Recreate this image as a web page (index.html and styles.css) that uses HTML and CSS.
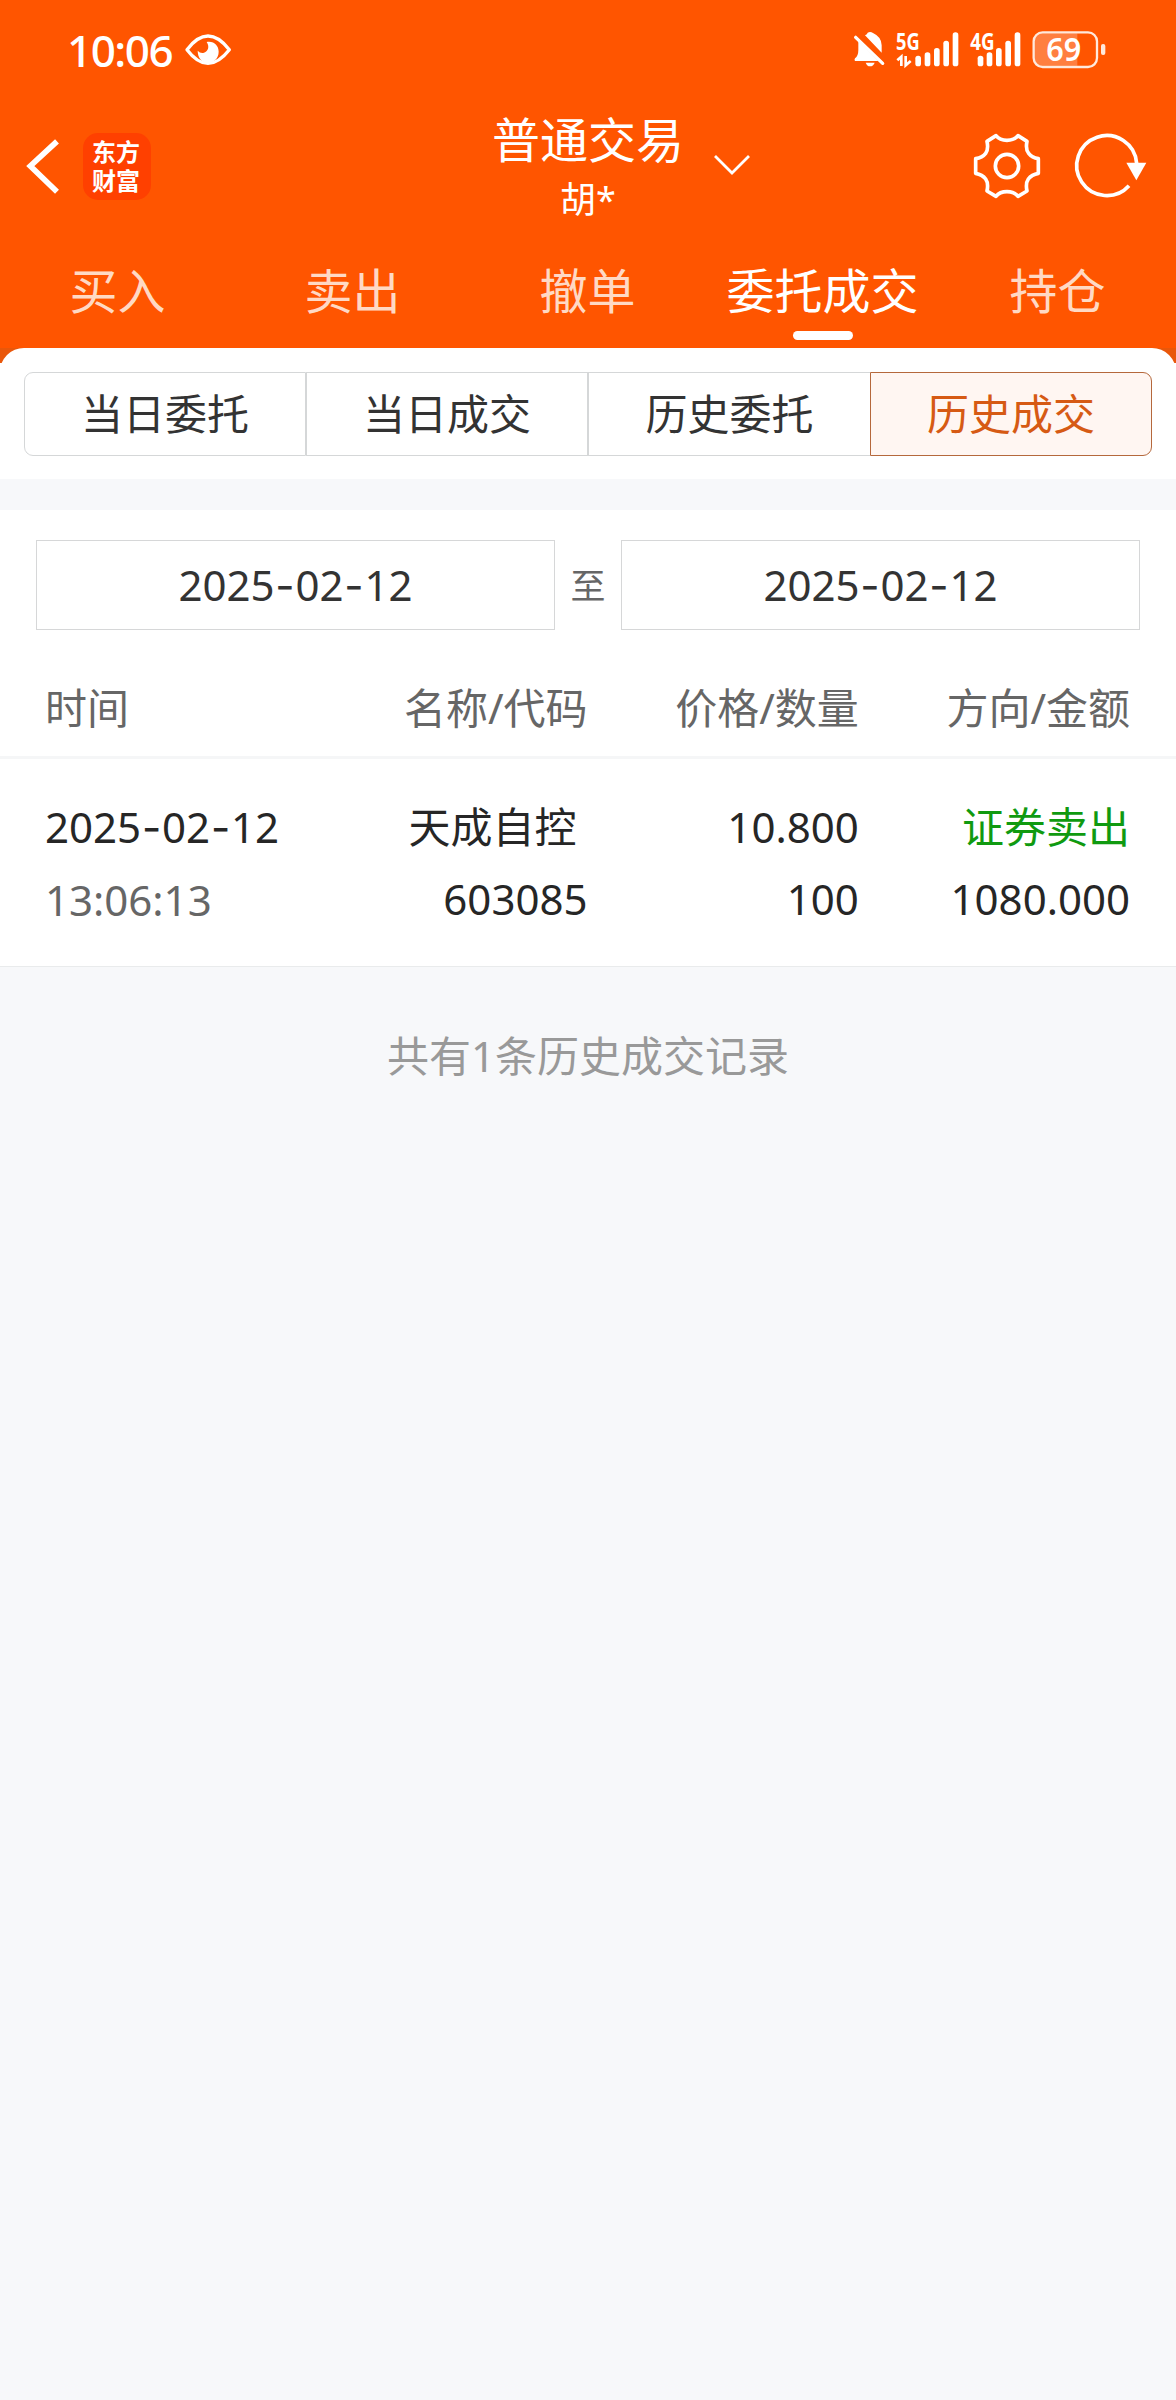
FILE: index.html
```html
<!DOCTYPE html>
<html lang="zh-CN">
<head>
<meta charset="utf-8">
<title>普通交易</title>
<link rel="stylesheet" href="styles.css">
</head>
<body>
<header class="top">
  <div class="status">
    <span class="clock">10:06</span>
    <svg class="eye" width="48" height="34" viewBox="552 98 144 102">
      <path d="M561 148Q592 107 624 107Q656 107 688 148Q656 189 624 189Q592 189 561 148Z" fill="none" stroke="#fff" stroke-width="10" stroke-linejoin="round"/>
      <path d="M620 125C642 121 656 136 656 154C656 174 641 187 624 187C606 187 593 173 593 151Q601 160 612 157C625 153 629 138 620 125Z" fill="#fff"/>
    </svg>
    <div class="status-icons">
      <svg width="31" height="38" viewBox="41 93 93 114">
        <path d="M74 106Q81 103 82 98Q90 94 98 99Q124 111 124 136V158Z" fill="#fff"/>
        <path d="M54 122L114 183H44Q41 180 44 175Q54 168 54 150Z" fill="#fff"/>
        <path d="M46 112L127 190" stroke="#fff" stroke-width="10" stroke-linecap="round"/>
        <path d="M76 188H103Q99 199 89 199Q80 199 76 188Z" fill="#fff"/>
      </svg>
      <svg class="signal-main" width="63" height="60" viewBox="167 60 189 180">
        <text class="net" x="167" y="149" textLength="71" lengthAdjust="spacingAndGlyphs">5G</text>
        <path d="M171 181L183 170V198M196 168V196L211 183" fill="none" stroke="#fff" stroke-width="8"/>
        <g fill="#fff">
          <rect x="225" y="167" width="17" height="32" rx="8"/>
          <rect x="253" y="157" width="17" height="42" rx="8"/>
          <rect x="281" y="144" width="17" height="55" rx="8"/>
          <rect x="309" y="122" width="17" height="77" rx="8"/>
          <rect x="337" y="97" width="17" height="102" rx="8"/>
        </g>
      </svg>
      <svg class="signal-alt" width="51" height="60" viewBox="389 60 153 180">
        <text class="net" x="390" y="149" textLength="73" lengthAdjust="spacingAndGlyphs">4G</text>
        <g fill="#fff">
          <rect x="412" y="167" width="17" height="32" rx="8"/>
          <rect x="439" y="157" width="17" height="42" rx="8"/>
          <rect x="467" y="144" width="17" height="55" rx="8"/>
          <rect x="495" y="122" width="17" height="77" rx="8"/>
          <rect x="523" y="97" width="17" height="102" rx="8"/>
        </g>
      </svg>
      <svg class="battery" width="74" height="60" viewBox="575 60 222 180">
        <path d="M711 100H605Q583 100 583 122V175Q583 197 605 197H711Z" fill="#ff7f40"/>
        <rect x="580" y="97" width="190" height="104" rx="27" fill="none" stroke="#ffe9dc" stroke-width="7"/>
        <rect x="782" y="132" width="13" height="33" rx="6" fill="#ffe9dc"/>
        <text class="level" x="618" y="183" textLength="105" lengthAdjust="spacingAndGlyphs">69</text>
      </svg>
    </div>
  </div>

  <div class="appbar">
    <div class="left">
      <svg width="36" height="60" viewBox="76 408 108 180">
        <path d="M172 424L92 498L172 575" fill="none" stroke="#fff" stroke-width="17" stroke-linejoin="miter"/>
      </svg>
      <div class="logo"><span>东方</span><span>财富</span></div>
    </div>
    <div class="heading">
      <h1>普通交易</h1>
      <p>胡*</p>
    </div>
    <div class="right">
      <svg class="caret" width="38" height="22" viewBox="0 0 38 22">
        <path d="M2 1L19 18L36 1" fill="none" stroke="#fff" stroke-width="2.8"/>
      </svg>
      <svg class="gear" width="68" height="66" viewBox="398 399 204 198">
        <path d="M467 407Q478 421 500 421Q522 421 533 407L560 424Q555 448 565 460Q575 473 594 476V520Q574 524 564 537Q555 550 560 573L533 589Q522 575 500 575Q478 575 467 589L440 573Q445 550 436 537Q426 524 406 520V476Q426 473 436 460Q445 448 440 424Z" fill="none" stroke="#fff" stroke-width="11" stroke-linejoin="round"/>
        <circle cx="500" cy="498" r="35" fill="none" stroke="#fff" stroke-width="11"/>
      </svg>
      <svg class="refresh" width="72" height="66" viewBox="705 399 216 198">
        <path d="M890 490A90 90 0 1 0 867 557" fill="none" stroke="#fff" stroke-width="11"/>
        <path d="M859 488H919L889 541Z" fill="#fff"/>
      </svg>
    </div>
  </div>

  <nav class="nav">
    <a>买入</a><a>卖出</a><a>撤单</a><a class="on">委托成交</a><a>持仓</a>
  </nav>
</header>

<div class="sheet-back">
  <section class="sheet">
    <div class="segments">
      <button>当日委托</button><button>当日成交</button><button>历史委托</button><button class="on">历史成交</button>
    </div>
  </section>
</div>

<main class="records">
  <div class="range">
    <div class="date">2025<i>-</i>02<i>-</i>12</div>
    <span class="to">至</span>
    <div class="date">2025<i>-</i>02<i>-</i>12</div>
  </div>
  <div class="row head">
    <span>时间</span><span>名称/代码</span><span>价格/数量</span><span>方向/金额</span>
  </div>
  <div class="row entry">
    <div><span class="day">2025<i>-</i>02<i>-</i>12</span><span class="time">13:06:13</span></div>
    <div><span class="name">天成自控</span><span>603085</span></div>
    <div><span>10.800</span><span>100</span></div>
    <div><span class="sell">证券卖出</span><span>1080.000</span></div>
  </div>
</main>
<p class="summary">共有1条历史成交记录</p>
</body>
</html>
```

FILE: styles.css
```css
* {
  box-sizing: border-box;
}

body {
  margin: 0;
  min-height: 2400px;
  background: #f7f8fa;
  color: #262626;
  font-family: "Noto Sans", "Noto Sans CJK SC", sans-serif;
  font-size: 42px;
}

h1,
p {
  margin: 0;
  font-weight: 400;
}

svg {
  display: block;
  flex: none;
  overflow: visible;
}

i {
  padding: 0 0.8px;
  font-family: Inter, sans-serif;
  font-style: normal;
}

.top {
  background: #ff5500;
  color: #fff;
}

.status {
  display: flex;
  align-items: center;
  height: 100px;
  padding: 0 70px 0 67px;
}

.clock {
  width: 117px;
  margin-top: -1px;
  font-size: 44px;
  font-weight: 500;
  letter-spacing: -1.5px;
  line-height: 60px;
}

.status-icons {
  display: flex;
  margin-left: auto;
  align-items: center;
}

.signal-main,
.signal-alt,
.battery {
  margin-left: 11px;
}

.net {
  fill: #fff;
  font-size: 70px;
  font-weight: 700;
}

.level {
  fill: #fff;
  font-size: 98px;
  font-weight: 600;
}

.appbar {
  display: grid;
  grid-template-columns: 1fr auto 1fr;
  align-items: center;
  height: 132px;
  padding: 0 29px;
}

.left,
.right {
  display: flex;
  align-items: center;
}

.left {
  margin-left: -4px;
}

.logo {
  display: flex;
  flex-direction: column;
  align-items: center;
  justify-content: center;
  width: 68px;
  height: 67px;
  margin-left: 22px;
  padding-right: 2px;
  border-radius: 15px;
  background: #ff4000;
  font-size: 24px;
  font-weight: 700;
  line-height: 29px;
}

.heading {
  padding-top: 7px;
  text-align: center;
}

.heading h1 {
  font-size: 48px;
  line-height: 60px;
}

.heading p {
  font-size: 36px;
  line-height: 59px;
}

.caret {
  margin-left: 29px;
}

.gear {
  margin-left: auto;
}

.refresh {
  margin-left: 34px;
}

.nav {
  display: grid;
  grid-template-columns: repeat(5, 1fr);
  height: 116px;
  padding-right: 1px;
  font-size: 48px;
  line-height: 117px;
  text-align: center;
  color: #ffd9c4;
}

.nav .on {
  position: relative;
  color: #fff;
}

.nav .on::after {
  content: "";
  position: absolute;
  left: 50%;
  bottom: 9px;
  width: 60px;
  height: 9px;
  margin-left: -30px;
  border-radius: 5px;
  background: #fff;
}

.sheet-back {
  background: linear-gradient(#e9570a 15px, #fff 15px);
}

.sheet {
  height: 131px;
  padding: 24px;
  border-radius: 24px 24px 0 0;
  background: #fff;
}

.segments {
  display: grid;
  grid-template-columns: repeat(4, 1fr);
  height: 84px;
}

.segments button {
  padding: 0;
  border: 1px solid #d5d7d8;
  background: #fff;
  color: #333;
  font: inherit;
  line-height: 82px;
}

.segments button:first-child {
  border-radius: 9px 0 0 9px;
}

.segments button:nth-child(3) {
  border-right: 0;
}

.segments .on {
  border-color: #b5683c;
  border-radius: 0 9px 9px 0;
  background: #fff6f2;
  color: #d65a14;
}

.records {
  margin-top: 31px;
  border-bottom: 1px solid #e9ebec;
  background: #fff;
}

.range {
  display: grid;
  grid-template-columns: 1fr 66px 1fr;
  height: 150px;
  padding: 30px 36px;
  text-align: center;
  line-height: 88px;
}

.date {
  height: 90px;
  border: 1px solid #d6d7d8;
  color: #333;
}

.to {
  color: #666;
  font-size: 35px;
  line-height: 91px;
}

.row {
  display: grid;
  grid-template-columns: repeat(4, 1fr);
  padding: 0 46px 0 45px;
  text-align: right;
}

.row > :first-child {
  text-align: left;
}

.head {
  height: 99px;
  border-bottom: 3px solid #f5f6f7;
  color: #666;
  line-height: 96px;
}

.entry {
  height: 207px;
  padding-top: 32px;
  line-height: 72px;
}

.entry span {
  display: block;
}

.entry .name {
  padding-right: 11px;
}

.entry .time {
  color: #666;
}

.entry .sell {
  color: #109a10;
}

.summary {
  padding-top: 52px;
  color: #999;
  line-height: 73px;
  text-align: center;
}
```
